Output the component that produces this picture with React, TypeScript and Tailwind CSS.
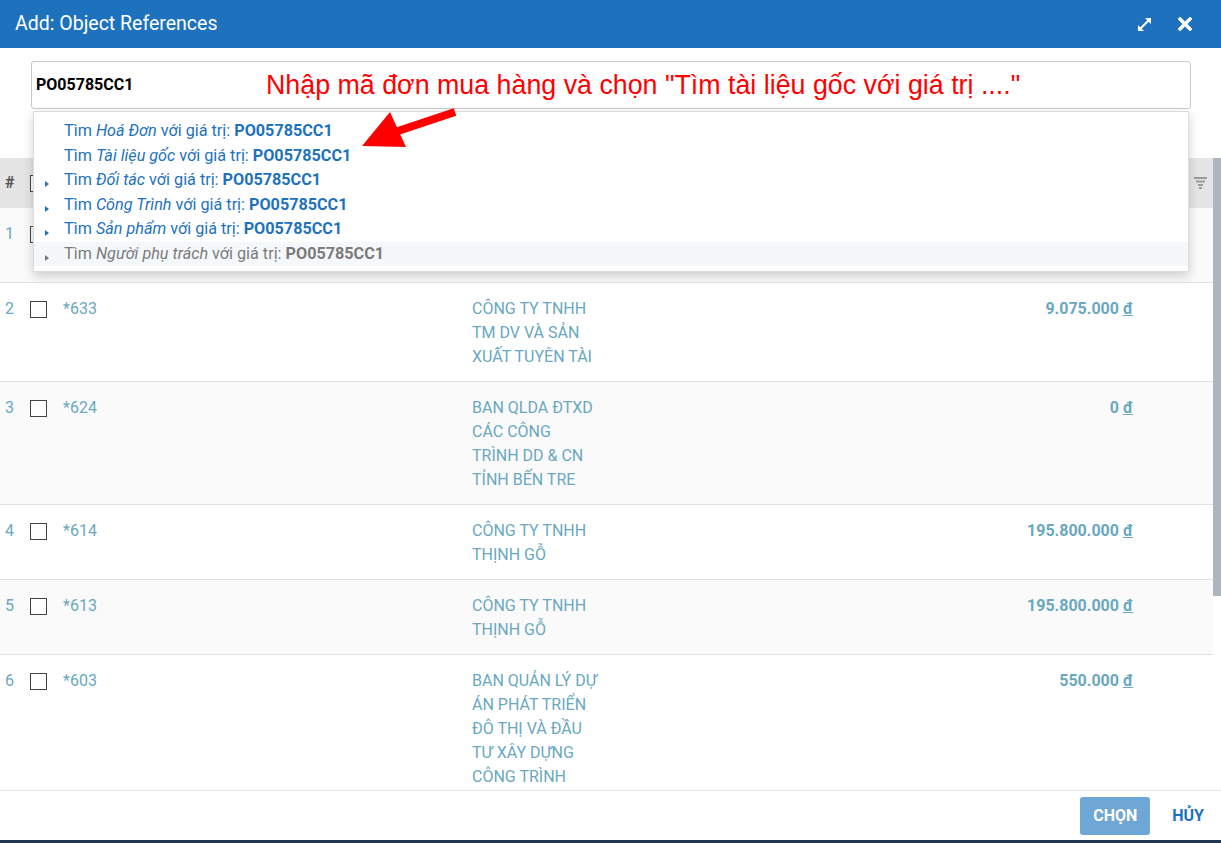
import React from "react";

const rows = [
  { n: 1, code: "", name: [" ", " "], amount: "" },
  { n: 2, code: "*633", name: ["CÔNG TY TNHH", "TM DV VÀ SẢN", "XUẤT TUYÊN TÀI"], amount: "9.075.000" },
  { n: 3, code: "*624", name: ["BAN QLDA ĐTXD", "CÁC CÔNG", "TRÌNH DD & CN", "TỈNH BẾN TRE"], amount: "0" },
  { n: 4, code: "*614", name: ["CÔNG TY TNHH", "THỊNH GỖ"], amount: "195.800.000" },
  { n: 5, code: "*613", name: ["CÔNG TY TNHH", "THỊNH GỖ"], amount: "195.800.000" },
  { n: 6, code: "*603", name: ["BAN QUẢN LÝ DỰ", "ÁN PHÁT TRIỂN", "ĐÔ THỊ VÀ ĐẦU", "TƯ XÂY DỰNG", "CÔNG TRÌNH"], amount: "550.000" },
];

const suggestions = [
  { label: "Hoá Đơn", arrow: false },
  { label: "Tài liệu gốc", arrow: false },
  { label: "Đối tác", arrow: true },
  { label: "Công Trình", arrow: true },
  { label: "Sản phẩm", arrow: true },
  { label: "Người phụ trách", arrow: true, muted: true },
];

const Checkbox = () => (
  <span className="block w-[17px] h-[17px] border-[1.5px] border-[#444] bg-white" />
);

export default function App() {
  return (
    <div
      className="w-[1221px] h-[843px] flex flex-col bg-white overflow-hidden"
      style={{ fontFamily: "Roboto, 'Liberation Sans', sans-serif" }}
    >
      {/* header */}
      <div className="h-12 shrink-0 bg-[#1e72bd] flex items-center justify-between pl-[15px] pr-[29px]">
        <span className="text-white text-[19.5px]">Add: Object References</span>
        <div className="flex items-center gap-[26px]">
          <svg width="15" height="15" viewBox="0 0 15 15" fill="white">
            <path d="M3.5 11.5 L11.5 3.5" stroke="white" strokeWidth="2.2" />
            <polygon points="8,1 14,1 14,7" />
            <polygon points="1,8 1,14 7,14" />
          </svg>
          <svg width="14" height="14" viewBox="0 0 14 14">
            <path d="M2 2 L12 12 M12 2 L2 12" stroke="white" strokeWidth="3.4" strokeLinecap="square" />
          </svg>
        </div>
      </div>

      {/* search area */}
      <div className="relative h-[110px] shrink-0 pt-[13px] pl-[31px] pr-[30px]">
        <div className="h-12 border border-[#c8c8c8] rounded-[3px] flex items-center pl-1">
          <span className="w-[230px] text-[16px] font-bold text-black">PO05785CC1</span>
          <span
            className="text-[26.8px] text-[#ff0000] leading-none whitespace-nowrap"
            style={{ fontFamily: "'Liberation Sans', sans-serif" }}
          >
            Nhập mã đơn mua hàng và chọn "Tìm tài liệu gốc với giá trị ...."
          </span>
        </div>

        {/* suggestion dropdown */}
        <div className="absolute z-20 left-[33px] top-[63px] w-[1156px] bg-white border border-[#dcdcdc] shadow-[0_4px_10px_rgba(0,0,0,0.18)] pt-[7px] pb-[5px]">
          {suggestions.map((s) => (
            <div
              key={s.label}
              className={`h-[24.5px] flex items-center text-[16.2px] ${s.muted ? "bg-[#f5f8fb] text-[#7b7b7b]" : "text-[#1e72bd]"}`}
            >
              <span className="w-[30px] flex justify-end pr-[15px] pt-[8px]">
                {s.arrow && (
                  <span
                    className={`block w-0 h-0 border-y-[3.5px] border-y-transparent border-l-[4px] ${s.muted ? "border-l-[#777]" : "border-l-[#1e72bd]"}`}
                  />
                )}
              </span>
              <span>
                Tìm <i>{s.label}</i> với giá trị: <b>PO05785CC1</b>
              </span>
            </div>
          ))}
        </div>

        {/* red arrow annotation */}
        <svg className="absolute z-30 left-[340px] top-[52px]" width="130" height="60" viewBox="0 0 130 60">
          <line x1="58" y1="31" x2="115" y2="12" stroke="#ff0000" strokeWidth="8" />
          <polygon points="22,46 50,12 66,47" fill="#ff0000" />
        </svg>
      </div>

      {/* table */}
      <div className="flex-1 flex min-h-0">
        <div className="flex-1 flex flex-col min-w-0 overflow-hidden">
          <div className="h-[50px] shrink-0 bg-[#e5e5e5] flex items-center text-[16px] text-[#555]">
            <span className="w-[30px] pl-[5px] font-bold">#</span>
            <span className="w-[33px]">
              <Checkbox />
            </span>
            <span className="flex-1" />
            <span className="w-[80px] flex justify-end pr-[6px]">
              <svg width="13" height="12" viewBox="0 0 13 12" fill="#9a9a9a">
                <rect x="0" y="0" width="13" height="2" />
                <rect x="2" y="3.5" width="9" height="2" />
                <rect x="4" y="7" width="5" height="2" />
                <rect x="5" y="10" width="3" height="2" />
              </svg>
            </span>
          </div>
          {rows.map((r) => (
            <div
              key={r.n}
              className={`shrink-0 flex items-start pt-[14px] pb-[12px] border-b border-[#e0e0e6] text-[16px] leading-6 text-[#6aa8c0] ${r.n % 2 === 1 ? "bg-[#fafafa]" : "bg-white"}`}
            >
              <span className="w-[30px] pl-[5px]">{r.n}</span>
              <span className="w-[33px] pt-[4px]">
                <Checkbox />
              </span>
              <span className="w-[409px]">{r.code}</span>
              <span className="w-[200px]">
                {r.name.map((l, i) => (
                  <div key={i} className="h-6">{l}</div>
                ))}
              </span>
              <span className="flex-1 text-right font-bold">
                {r.amount && (
                  <>
                    {r.amount} <span className="underline">đ</span>
                  </>
                )}
              </span>
              <span className="w-[80px]" />
            </div>
          ))}
        </div>
        <div className="w-2 shrink-0 bg-white">
          <div className="h-[438px] bg-[#adb5bd]" />
        </div>
      </div>

      {/* footer */}
      <div className="h-[50px] shrink-0 border-t border-[#e5e5e5] flex items-center justify-end gap-[22px] pr-[17px]">
        <button className="h-[38px] w-[70px] rounded-[3px] bg-[#6ea6d5] text-white font-bold text-[16px]">
          CHỌN
        </button>
        <button className="text-[#1e72bd] font-bold text-[16px]">HỦY</button>
      </div>
      <div className="h-[3px] shrink-0 bg-[#22374f]" />
    </div>
  );
}
